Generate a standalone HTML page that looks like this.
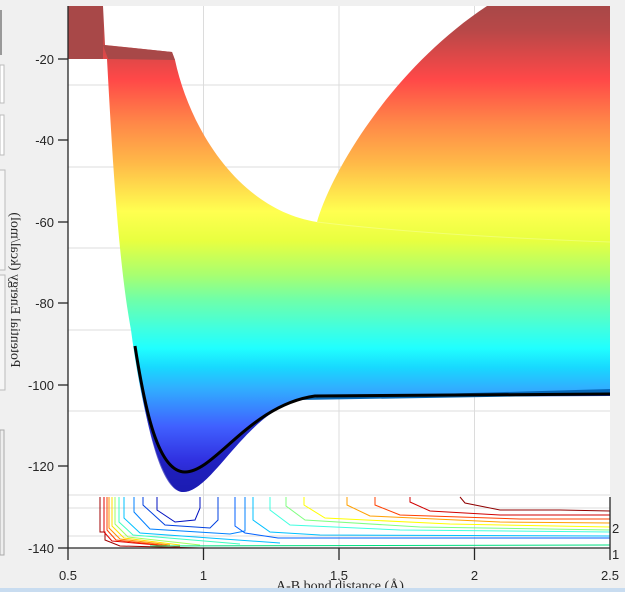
<!DOCTYPE html>
<html><head><meta charset="utf-8"><style>
html,body{margin:0;padding:0;width:625px;height:592px;overflow:hidden;background:#f0f0f0;font-family:"Liberation Sans",sans-serif}
svg{position:absolute;left:0;top:0}
</style></head><body>
<svg width="625" height="592" viewBox="0 0 625 592">
<defs>
<linearGradient id="jet" gradientUnits="userSpaceOnUse" x1="0" y1="6" x2="0" y2="495">
<stop offset="0" stop-color="#a84848"/>
<stop offset="0.05" stop-color="#b84848"/>
<stop offset="0.15" stop-color="#ff4848"/>
<stop offset="0.24" stop-color="#ff8848"/>
<stop offset="0.32" stop-color="#ffb848"/>
<stop offset="0.42" stop-color="#ffff50"/>
<stop offset="0.48" stop-color="#e8ff40"/>
<stop offset="0.55" stop-color="#a8ff70"/>
<stop offset="0.60" stop-color="#70ffa8"/>
<stop offset="0.66" stop-color="#40ffe0"/>
<stop offset="0.70" stop-color="#20ffff"/>
<stop offset="0.74" stop-color="#18d8ff"/>
<stop offset="0.78" stop-color="#30b0ff"/>
<stop offset="0.86" stop-color="#4060ff"/>
<stop offset="0.93" stop-color="#3030e0"/>
<stop offset="1" stop-color="#2020b0"/>
</linearGradient>
</defs>
<rect x="68" y="6" width="542" height="542" fill="#fff"/>
<g stroke="#dcdcdc" stroke-width="1">
<line x1="203.5" y1="6" x2="203.5" y2="548"/><line x1="339" y1="6" x2="339" y2="548"/><line x1="474.5" y1="6" x2="474.5" y2="548"/>
<line x1="68" y1="85" x2="610" y2="85"/><line x1="68" y1="167" x2="610" y2="167"/><line x1="68" y1="248" x2="610" y2="248"/>
<line x1="68" y1="330" x2="610" y2="330"/><line x1="68" y1="411" x2="610" y2="411"/><line x1="68" y1="495" x2="610" y2="495"/>
<line x1="68" y1="508" x2="610" y2="508"/><line x1="68" y1="536" x2="610" y2="536"/>
</g>
<path fill="url(#jet)" d="M68,6 L103,6 L105,45 L172,52 L175,60 C190,130 240,210 317,222 C330,175 390,70 487,6 L610,6 L610,396 L315,397 C250,400 215,492 183,492 C160,492 140,400 131,330 C118,260 112,150 107,59 L68,59 Z"/>
<rect x="68" y="6" width="35" height="53" fill="#a84848"/>
<path fill="#a84848" d="M103,45 L172,52 L175,60 L108,59 Z"/>
<path fill="none" stroke="#ffffff" stroke-opacity="0.25" d="M317,222 C400,232 500,238 610,242"/>
<path fill="#1a1ab0" opacity="0.7" d="M137,360 C147,420 160,472 185,472 C215,472 250,405 315,396 L610,393 L610,396 L315,397 C250,400 215,492 183,492 C160,492 145,420 137,360 Z"/>
<path fill="#0868b8" d="M300,398 L610,389 L610,395 L300,400 Z"/>
<path fill="none" stroke="#000" stroke-width="3" d="M135,346 C145,410 158,472 185,472 C215,472 250,405 315,396 L610,394"/>
<g fill="none" stroke-width="1">
<path stroke="#a00000" d="M100,497 V532 H105 V540 L120,546 L200,548"/>
<path stroke="#e00000" d="M104,497 V532 L112,541 L180,547"/>
<path stroke="#ff4000" d="M107,497 V530 L116,540 L170,546"/>
<path stroke="#ff9000" d="M109,497 V528 L120,539 L170,545"/>
<path stroke="#ffe000" d="M112,497 V526 L124,538 L180,545"/>
<path stroke="#a0ff60" d="M115,497 V524 L128,537 L200,545"/>
<path stroke="#40ffc0" d="M119,497 V522 L133,535 L240,544"/>
<path stroke="#00c0ff" d="M124,497 V518 L140,533 L280,543"/>
<path stroke="#0080ff" d="M134,497 V512 L150,529 L230,534 L245,531 V497"/>
<path stroke="#0040e0" d="M143,497 V505 L165,525 L210,528 L218,520 V497"/>
<path stroke="#0010c0" d="M157,497 V510 L175,522 L195,520 L200,508 V497"/>
<path stroke="#0060ff" d="M235,497 V526 L245,533 L278,538 L540,538 L610,538"/>
<path stroke="#00c0ff" d="M253,497 V520 L270,532 L320,535 L610,536"/>
<path stroke="#40ffe0" d="M270,497 V510 L290,525 L400,530 L610,532"/>
<path stroke="#80ff80" d="M286,497 V506 L305,520 L420,527 L610,530"/>
<path stroke="#ffff00" d="M304,497 V505 L325,518 L450,524 L610,527"/>
<path stroke="#ffa000" d="M347,497 V505 L370,516 L500,522 L610,523"/>
<path stroke="#ff4000" d="M375,497 V505 L400,515 L520,519 L610,519"/>
<path stroke="#d00000" d="M410,497 V502 L430,511 L500,515 L610,515"/>
<path stroke="#900000" d="M460,497 L465,503 L500,510 L560,510 L610,511"/>
<path stroke="#00e080" d="M150,546 L610,545"/>
</g>
<g stroke="#262626" stroke-width="1.3" fill="none">
<line x1="68" y1="6" x2="68" y2="548"/>
<line x1="68" y1="548" x2="610" y2="548"/>
<line x1="610" y1="497" x2="610" y2="560"/>
<line x1="68" y1="548" x2="68" y2="560"/><line x1="203.5" y1="548" x2="203.5" y2="560"/>
<line x1="339" y1="548" x2="339" y2="560"/><line x1="474.5" y1="548" x2="474.5" y2="560"/>
<line x1="58" y1="59" x2="68" y2="59"/><line x1="58" y1="140" x2="68" y2="140"/>
<line x1="58" y1="222" x2="68" y2="222"/><line x1="58" y1="303" x2="68" y2="303"/>
<line x1="58" y1="385" x2="68" y2="385"/><line x1="58" y1="466" x2="68" y2="466"/>
<line x1="58" y1="548" x2="68" y2="548"/>
</g>
<g font-size="13" fill="#262626" text-anchor="end">
<text x="54" y="64">-20</text><text x="54" y="145">-40</text><text x="54" y="227">-60</text>
<text x="54" y="308">-80</text><text x="54" y="390">-100</text><text x="54" y="471">-120</text><text x="54" y="553">-140</text>
</g>
<g font-size="13" fill="#262626" text-anchor="middle">
<text x="68" y="580">0.5</text><text x="203.5" y="580">1</text><text x="339" y="580">1.5</text>
<text x="474.5" y="580">2</text><text x="610" y="580">2.5</text>
</g>
<text x="612" y="533" font-size="13" fill="#262626">2</text>
<text x="612" y="559" font-size="13" fill="#262626">1</text>
<text x="340" y="590" font-size="14" fill="#262626" text-anchor="middle" font-family="Liberation Serif, serif">A-B bond distance (Å)</text>
<text transform="translate(11,290) rotate(-90) scale(1,-1)" font-size="14" fill="#262626" text-anchor="middle" font-family="Liberation Serif, serif">Potential Energy (kcal/mol)</text>
<rect x="0" y="10" width="2" height="45" fill="#999"/>
<rect x="0" y="65" width="4" height="38" fill="#fff" stroke="#bbb"/>
<rect x="0" y="115" width="4" height="40" fill="#fff" stroke="#bbb"/>
<rect x="-1" y="170" width="6" height="100" fill="#f6f6f6" stroke="#bbb"/>
<rect x="-1" y="275" width="6" height="115" fill="#f6f6f6" stroke="#bbb"/>
<rect x="0" y="430" width="4" height="125" fill="#eee" stroke="#aaa"/>
<rect x="0" y="588" width="625" height="4" fill="#c8dcf0"/>
</svg>
</body></html>
